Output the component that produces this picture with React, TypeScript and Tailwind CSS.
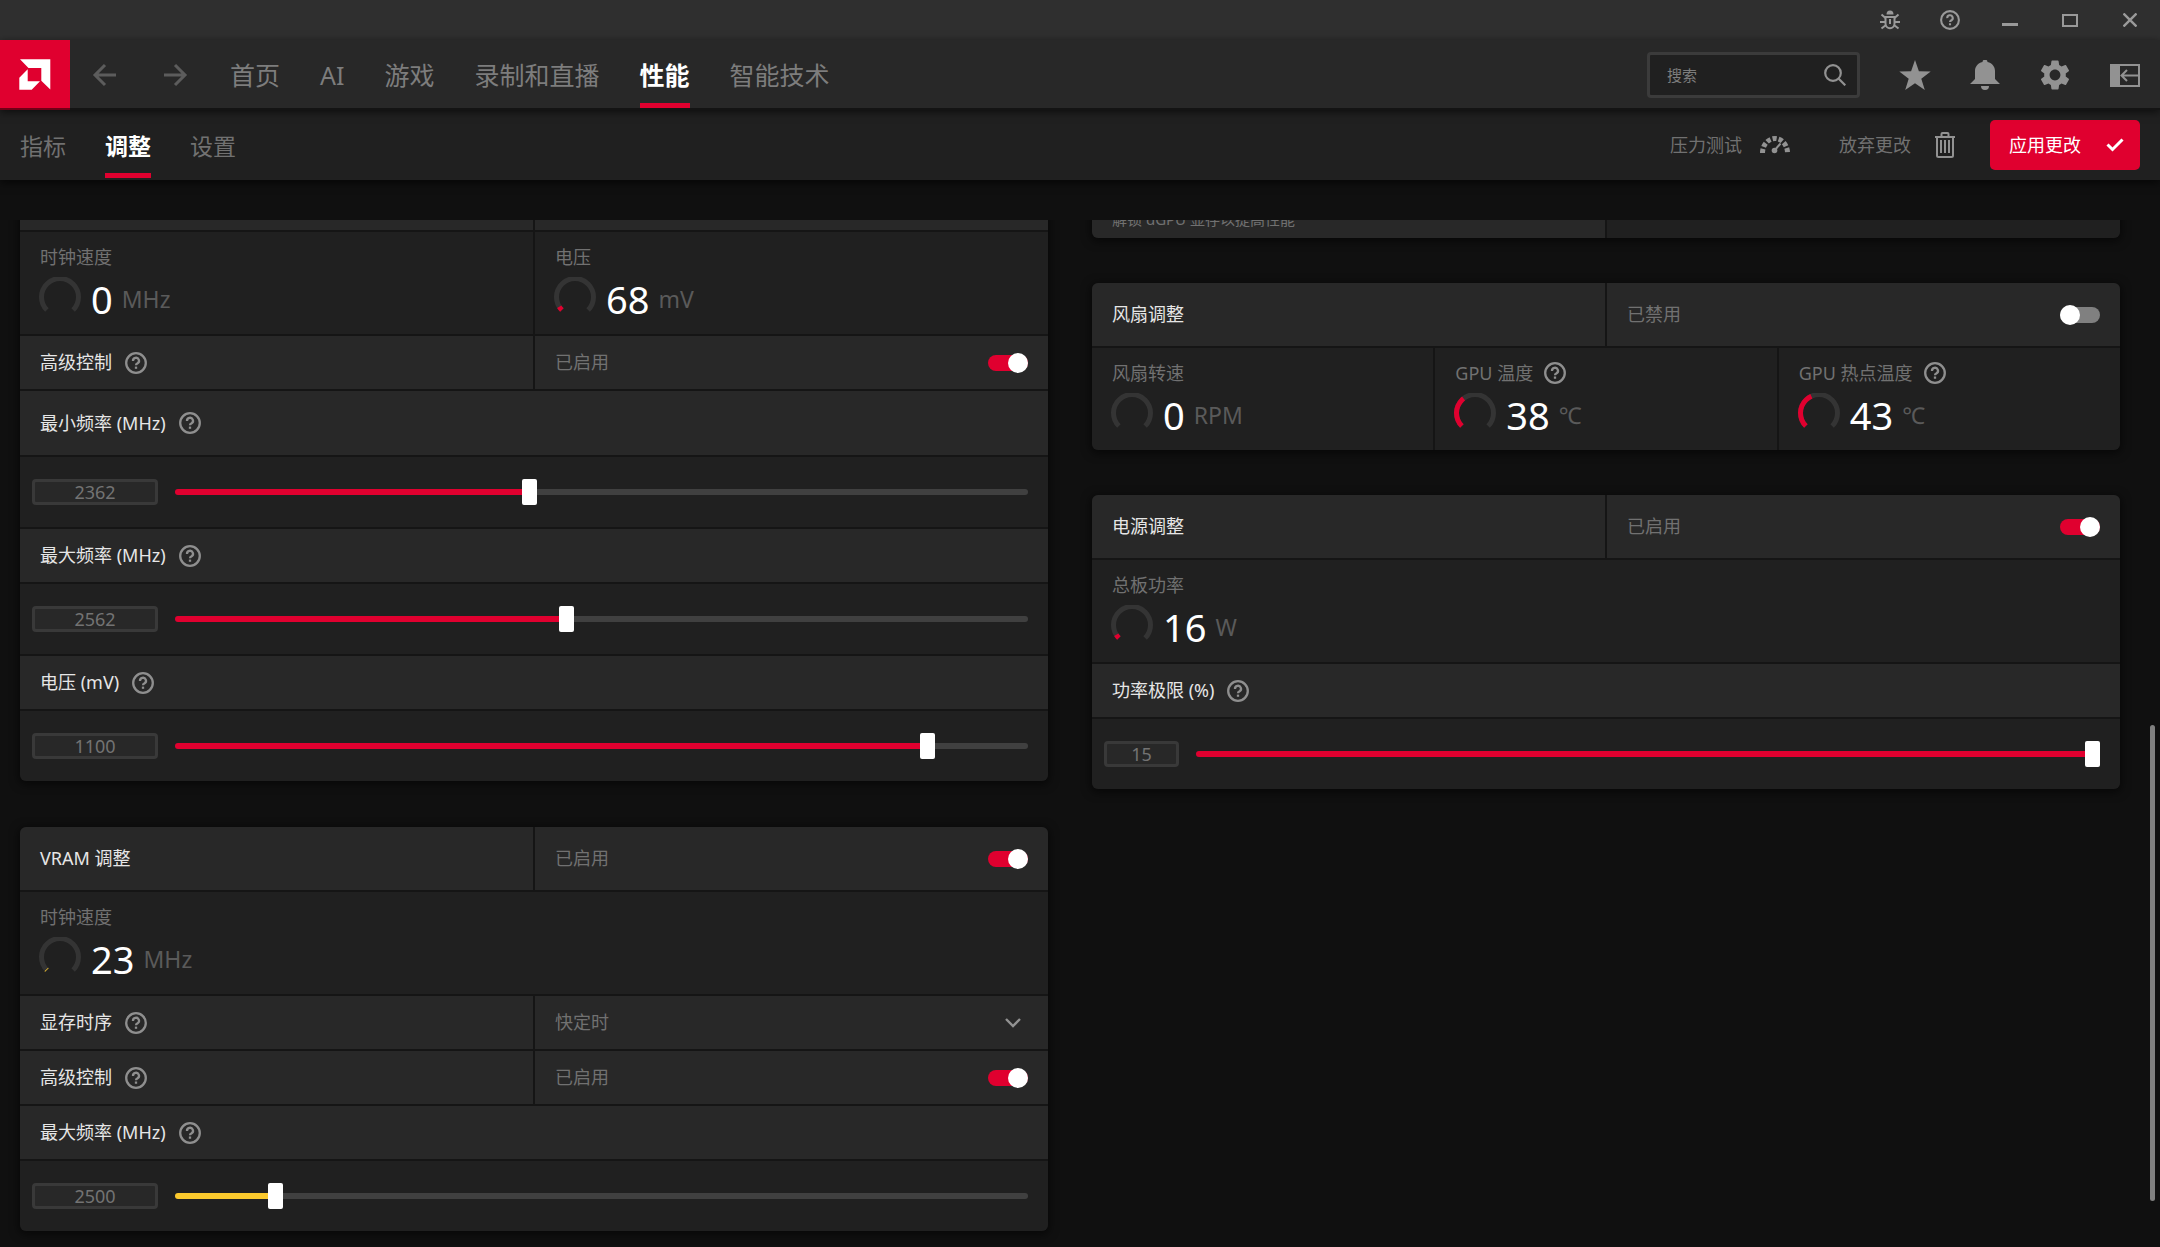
import React, { useState } from 'react';
import { MdSettings } from 'react-icons/md';

const RED = '#e0002f';
const YELLOW = '#fbc92d';

/* ---------- icons ---------- */

const AmdLogo = () => (
  <svg viewBox="0 0 32 32" className="w-8 h-8" fill="#fff" aria-hidden="true">
    <path d="M1 0.300H31.300V30.500L22.300 21.700V9H9.500Z" />
    <path d="M8.700 10.300V22.300H21L12.700 30.700H0.300V18.700Z" />
  </svg>
);

const ArrowIcon = ({ flip = false }: { flip?: boolean }) => (
  <svg viewBox="0 0 24 24" className={flip ? 'w-6 h-6 rotate-180' : 'w-6 h-6'} fill="none" stroke="currentColor" strokeWidth="3" aria-hidden="true">
    <path d="M13 2L3 12L13 22M3 12H24" />
  </svg>
);

const HelpIcon = ({ className = 'w-[22px] h-[22px]' }: { className?: string }) => (
  <svg viewBox="0 0 22 22" className={className} fill="none" stroke="currentColor" strokeWidth="2.300" aria-hidden="true">
    <circle cx="11" cy="11" r="9.800" />
    <path d="M8 9A3 3 0 1 1 12.600 11.300Q11 12.200 11 13.300" />
    <path d="M11 14.600V16.800" />
  </svg>
);

const BugIcon = () => (
  <svg viewBox="0 0 20 20" className="w-5 h-5" fill="none" stroke="currentColor" strokeWidth="2" aria-hidden="true">
    <path d="M6.500 4.500A3.500 4 0 0 1 13.500 4.500Z" fill="currentColor" stroke="none" />
    <path d="M5.500 7H14.500V13.500A4.500 4.800 0 0 1 5.500 13.500Z" />
    <path d="M10 9V14" />
    <path d="M5.500 8L1.500 4.500M14.500 8L18.500 4.500M5 12H0M15 12H20M6 15L1.500 18.500M14 15L18.500 18.500" />
  </svg>
);

const SearchIcon = () => (
  <svg viewBox="0 0 22 22" className="w-[22px] h-[22px]" fill="none" stroke="currentColor" strokeWidth="2.200" aria-hidden="true">
    <circle cx="9" cy="9" r="7.800" />
    <path d="M14.500 14.500L21.300 21.300" />
  </svg>
);

const StarIcon = () => (
  <svg viewBox="0 0 32 30" className="w-8 h-[30px]" fill="currentColor" aria-hidden="true">
    <path d="M16 0L19.900 11.300L31.700 11.500L22.300 18.700L25.800 30L16 23.200L6.200 30L9.700 18.700L0.300 11.500L12.100 11.300Z" />
  </svg>
);

const BellIcon = () => (
  <svg viewBox="0 0 30 30" className="w-[30px] h-[30px]" fill="currentColor" aria-hidden="true">
    <path d="M12.500 2A2.500 2.300 0 0 1 17.500 2C22.500 3.200 25 7 25 11V19L30 24H0L5 19V11C5 7 7.500 3.200 12.500 2Z" />
    <path d="M11 26H19A4 4 0 0 1 11 26Z" />
  </svg>
);

const PanelIcon = () => (
  <svg viewBox="0 0 30 23" className="w-[30px] h-[23px]" fill="none" stroke="currentColor" strokeWidth="2" aria-hidden="true">
    <path d="M1 1H29V22H1Z" />
    <path d="M1 1H9V22H1Z" fill="currentColor" />
    <path d="M29 11.500H12M17 6L11.500 11.500L17 17" />
  </svg>
);

const StressIcon = () => (
  <svg viewBox="0 0 30 20" className="w-[30px] h-5" fill="none" stroke="currentColor" aria-hidden="true">
    <path d="M2.500 18A12.500 14.500 0 0 1 27.500 18" strokeWidth="5" strokeDasharray="4.200 2" />
    <circle cx="14.500" cy="15.500" r="2.800" fill="currentColor" stroke="none" />
    <path d="M14.500 15.500L20.500 8.500" strokeWidth="2" />
  </svg>
);

const TrashIcon = () => (
  <svg viewBox="0 0 20 26" className="w-5 h-[26px]" fill="none" stroke="currentColor" strokeWidth="2" aria-hidden="true">
    <path d="M0 5H20M6.500 5V2Q6.500 1 7.500 1H12.500Q13.500 1 13.500 2V5" />
    <path d="M2 5V23.500Q2 25 3.500 25H16.500Q18 25 18 23.500V5" />
    <path d="M6 8V21M10 8V21M14 8V21" />
  </svg>
);

/* ---------- building blocks ---------- */

const Gauge = ({ percent, color }: { percent: number; color: string }) => (
  <svg viewBox="0 0 44 44" className="w-11 h-11 shrink-0" fill="none" strokeWidth="5" aria-hidden="true">
    <path d="M8.900 33.100A18.500 18.500 0 1 1 35.100 33.100" stroke="#343434" />
    {percent > 0 && (
      <path d="M8.900 33.100A18.500 18.500 0 1 1 35.100 33.100" stroke={color} pathLength={100} strokeDasharray={`${percent} 200`} />
    )}
  </svg>
);

interface MetricProps {
  label: string;
  value: number;
  unit: string;
  percent?: number;
  color?: string;
  help?: boolean;
}

const Metric = ({ label, value, unit, percent = 0, color = RED, help }: MetricProps) => (
  <div className="h-[102px] bg-[#202020] pt-[13px]">
    <div className="flex h-6 items-center gap-[11px] pl-5 text-[#717171]">
      <span>{label}</span>
      {help && <HelpButton label={label} />}
    </div>
    <div className="flex h-[60px] items-center gap-[9px] pl-[18px]">
      <Gauge percent={percent} color={color} />
      <span className="text-[38px] leading-none text-white">{value}</span>
      <span className="text-[23px] leading-none text-[#5a5a5a]">{unit}</span>
    </div>
  </div>
);

const HelpButton = ({ label }: { label: string }) => (
  <button type="button" aria-label={label} className="text-[#8f8f8f]">
    <HelpIcon />
  </button>
);

const Toggle = ({ label, checked, onChange }: { label: string; checked: boolean; onChange: (v: boolean) => void }) => (
  <input
    type="checkbox"
    role="switch"
    aria-label={label}
    checked={checked}
    onChange={(e) => onChange(e.target.checked)}
    className="relative h-4 w-10 appearance-none rounded-full bg-[#808080] before:absolute before:-top-0.5 before:left-0 before:h-5 before:w-5 before:rounded-full before:bg-white checked:bg-[#e0002f] checked:before:left-5"
  />
);

const Label = ({ text, help }: { text: string; help?: boolean }) => (
  <div className="flex items-center gap-[13px] bg-[#282828] px-5 text-[#e6e6e6]">
    <span>{text}</span>
    {help && <HelpButton label={text} />}
  </div>
);

const ToggleRow = ({ text, help, initial = true, header }: { text: string; help?: boolean; initial?: boolean; header?: boolean }) => {
  const [on, setOn] = useState(initial);
  return (
    <div className={header ? 'grid h-[63px] grid-cols-2 gap-[2px]' : 'grid h-[53px] grid-cols-2 gap-[2px]'}>
      <Label text={text} help={help} />
      <div className="flex items-center justify-between bg-[#282828] px-5 text-[#717171]">
        <span>{on ? '已启用' : '已禁用'}</span>
        <Toggle label={text} checked={on} onChange={setOn} />
      </div>
    </div>
  );
};

interface SliderProps {
  label: string;
  min: number;
  max: number;
  initial: number;
  color?: string;
  tall?: boolean;
  narrow?: boolean;
}

const SliderRow = ({ label, min, max, initial, color = RED, tall, narrow }: SliderProps) => {
  const [value, setValue] = useState(initial);
  const pct = ((value - min) / (max - min)) * 100;
  return (
    <>
      <div className={tall ? 'grid h-16' : 'grid h-[53px]'}>
        <Label text={label} help />
      </div>
      <div className="flex h-[70px] items-center gap-[17px] bg-[#202020] pl-3 pr-5">
        <input
          type="text"
          aria-label={label}
          value={value}
          onChange={(e) => setValue(Number(e.target.value) || 0)}
          className={`${narrow ? 'w-[75px]' : 'w-[126px]'} h-[26px] shrink-0 rounded-sm border-3 border-[#393939] bg-[#282828] text-center leading-none text-[#737373] outline-none`}
        />
        <input
          type="range"
          aria-label={label}
          min={min}
          max={max}
          value={value}
          onChange={(e) => setValue(Number(e.target.value))}
          style={{ background: `linear-gradient(to right, ${color} ${pct}%, #404040 ${pct}%)` }}
          className="h-1.5 min-w-0 flex-1 appearance-none rounded-full outline-none [&::-webkit-slider-thumb]:h-[26px] [&::-webkit-slider-thumb]:w-[15px] [&::-webkit-slider-thumb]:appearance-none [&::-webkit-slider-thumb]:rounded-xs [&::-webkit-slider-thumb]:bg-white"
        />
      </div>
    </>
  );
};

const Card = ({ children }: { children: React.ReactNode }) => (
  <section className="flex flex-col gap-[2px] overflow-hidden rounded-md bg-[#151515] shadow-[0_2px_8px_2px_rgba(0,0,0,0.5)]">
    {children}
  </section>
);

/* ---------- page ---------- */

const mainTabs = ['首页', 'AI', '游戏', '录制和直播', '性能', '智能技术'];
const subTabs = ['指标', '调整', '设置'];

const TitleBar = () => (
  <div className="flex h-10 justify-end bg-[#2f2f2f] text-[#9a9a9a]">
    <button type="button" aria-label="报告问题" className="flex w-[60px] items-center justify-center"><BugIcon /></button>
    <button type="button" aria-label="帮助" className="flex w-[60px] items-center justify-center"><HelpIcon className="w-5 h-5" /></button>
    <button type="button" aria-label="最小化" className="flex w-[60px] items-center justify-center pt-2">
      <span className="h-[3px] w-4 bg-current" />
    </button>
    <button type="button" aria-label="最大化" className="flex w-[60px] items-center justify-center">
      <span className="h-[13px] w-4 border-2 border-current" />
    </button>
    <button type="button" aria-label="关闭" className="flex w-[60px] items-center justify-center">
      <svg viewBox="0 0 14 14" className="w-3.5 h-3.5" stroke="currentColor" strokeWidth="2.400" aria-hidden="true">
        <path d="M0.500 0.500L13.500 13.500M13.500 0.500L0.500 13.500" />
      </svg>
    </button>
  </div>
);

const Header = () => (
  <header className="relative z-20 flex h-[70px] items-center bg-[#282828] shadow-[0_2px_8px_rgba(0,0,0,0.6)] after:pointer-events-none after:absolute after:inset-x-0 after:bottom-0 after:h-0.5 after:bg-black/50">
    <a href="#" aria-label="AMD" className="flex h-full w-[70px] items-center justify-center bg-[#e0002f]">
      <AmdLogo />
    </a>
    <button type="button" aria-label="后退" className="ml-[22px] text-[#5c5c5c]"><ArrowIcon /></button>
    <button type="button" aria-label="前进" className="ml-12 text-[#5c5c5c]"><ArrowIcon flip /></button>
    <nav className="ml-[42px] flex h-full gap-10 pb-0.5 text-[25px]">
      {mainTabs.map((tab) => (
        <a
          key={tab}
          href="#"
          className={
            tab === '性能'
              ? 'flex items-center border-b-5 border-[#e0002f] pt-[9px] font-bold text-white'
              : 'flex items-center pt-1 text-[#7d7d7d]'
          }
        >
          {tab}
        </a>
      ))}
    </nav>
    <label className="ml-auto mr-5 flex h-[46px] w-[213px] items-center rounded-sm border-3 border-[#3b3b3b] bg-[#202020] pl-[17px] pr-[11px] text-[#929292]">
      <input type="search" aria-label="搜索" placeholder="搜索" className="min-w-0 flex-1 bg-transparent text-[15px] outline-none placeholder:text-[#7d7d7d]" />
      <SearchIcon />
    </label>
    <div className="flex text-[#929292]">
      <button type="button" aria-label="收藏" className="flex w-[70px] justify-center"><StarIcon /></button>
      <button type="button" aria-label="通知" className="flex w-[70px] justify-center"><BellIcon /></button>
      <button type="button" aria-label="设置" className="flex h-[30px] w-[70px] items-center justify-center"><MdSettings size={36} className="shrink-0" /></button>
      <button type="button" aria-label="侧边栏" className="flex w-[70px] items-center justify-center"><PanelIcon /></button>
    </div>
  </header>
);

const SubHeader = () => (
  <div className="relative z-10 flex h-[70px] items-center bg-[#202020] px-5 shadow-[0_3px_8px_rgba(0,0,0,0.6)]">
    <nav className="flex h-full gap-[39px] pb-0.5 text-[23px]">
      {subTabs.map((tab) => (
        <a
          key={tab}
          href="#"
          className={
            tab === '调整'
              ? 'flex items-center border-b-5 border-[#e0002f] pt-[9px] font-bold text-white'
              : 'flex items-center pt-1 text-[#717171]'
          }
        >
          {tab}
        </a>
      ))}
    </nav>
    <button type="button" className="ml-auto flex items-center gap-[18px] text-[#717171]">
      压力测试 <span className="text-[#929292]"><StressIcon /></span>
    </button>
    <button type="button" className="ml-[49px] flex items-center gap-6 text-[#717171]">
      放弃更改 <span className="text-[#929292]"><TrashIcon /></span>
    </button>
    <button type="button" className="ml-[35px] flex h-[50px] w-[150px] items-center justify-between rounded-[5px] bg-[#e0002f] pl-[19px] pr-4 text-white">
      应用更改
      <svg viewBox="0 0 18 14" className="w-[18px] h-3.5" fill="none" stroke="currentColor" strokeWidth="3" aria-hidden="true">
        <path d="M1.500 6.500L6.500 11.500L16.500 1.500" />
      </svg>
    </button>
  </div>
);

const MemoryTimingRow = () => (
  <div className="grid h-[53px] grid-cols-2 gap-[2px]">
    <Label text="显存时序" help />
    <div className="relative flex items-center bg-[#282828] text-[#717171]">
      <select aria-label="显存时序" className="h-full w-full appearance-none bg-transparent px-5 outline-none">
        <option>快定时</option>
      </select>
      <svg viewBox="0 0 16 10" className="pointer-events-none absolute right-[27px] h-2.5 w-4" fill="none" stroke="#929292" strokeWidth="2.400" aria-hidden="true">
        <path d="M1 1L8 8L15 1" />
      </svg>
    </div>
  </div>
);

export default function App() {
  return (
    <div className="flex h-screen flex-col overflow-hidden bg-[#101010] font-['Noto_Sans','Noto_Sans_CJK_SC',sans-serif] text-[18px]">
      <TitleBar />
      <Header />
      <SubHeader />
      <main className="relative mt-10 min-h-0 flex-1 overflow-hidden pl-5 pr-10">
        {/* scrolled a little way down, so the first cards are cut at the top */}
        <div className="-mt-[53px] grid grid-cols-2 items-start gap-11">
          <div className="flex flex-col gap-[46px]">
            <Card>
              <div className="grid h-[63px] grid-cols-2 gap-[2px]">
                <div className="bg-[#282828]" />
                <div className="bg-[#282828]" />
              </div>
              <div className="grid grid-cols-2 gap-[2px]">
                <Metric label="时钟速度" value={0} unit="MHz" />
                <Metric label="电压" value={68} unit="mV" percent={5} />
              </div>
              <ToggleRow text="高级控制" help />
              <SliderRow label="最小频率 (MHz)" min={500} max={5000} initial={2362} tall />
              <SliderRow label="最大频率 (MHz)" min={500} max={5000} initial={2562} />
              <SliderRow label="电压 (mV)" min={700} max={1150} initial={1100} />
            </Card>
            <Card>
              <ToggleRow text="VRAM 调整" header />
              <Metric label="时钟速度" value={23} unit="MHz" percent={1} color={YELLOW} />
              <MemoryTimingRow />
              <ToggleRow text="高级控制" help />
              <SliderRow label="最大频率 (MHz)" min={2400} max={3300} initial={2500} color={YELLOW} />
            </Card>
          </div>
          <div className="flex flex-col gap-[45px]">
            <Card>
              <div className="grid h-[71px] grid-cols-2 gap-[2px]">
                <div className="flex items-end bg-[#282828] px-5 pb-[9px] text-[15px] leading-5 text-[#717171]">
                  解锁 dGPU 显存以提高性能
                </div>
                <div className="bg-[#202020]" />
              </div>
            </Card>
            <Card>
              <ToggleRow text="风扇调整" header initial={false} />
              <div className="grid grid-cols-3 gap-[2px]">
                <Metric label="风扇转速" value={0} unit="RPM" />
                <Metric label="GPU 温度" value={38} unit="℃" percent={36} help />
                <Metric label="GPU 热点温度" value={43} unit="℃" percent={41} help />
              </div>
            </Card>
            <Card>
              <ToggleRow text="电源调整" header />
              <Metric label="总板功率" value={16} unit="W" percent={5} />
              <SliderRow label="功率极限 (%)" min={-10} max={15} initial={15} narrow />
            </Card>
          </div>
        </div>
        <div className="absolute right-[5px] top-[505px] h-[476px] w-[5px] rounded-full bg-[#808080]" />
      </main>
    </div>
  );
}
